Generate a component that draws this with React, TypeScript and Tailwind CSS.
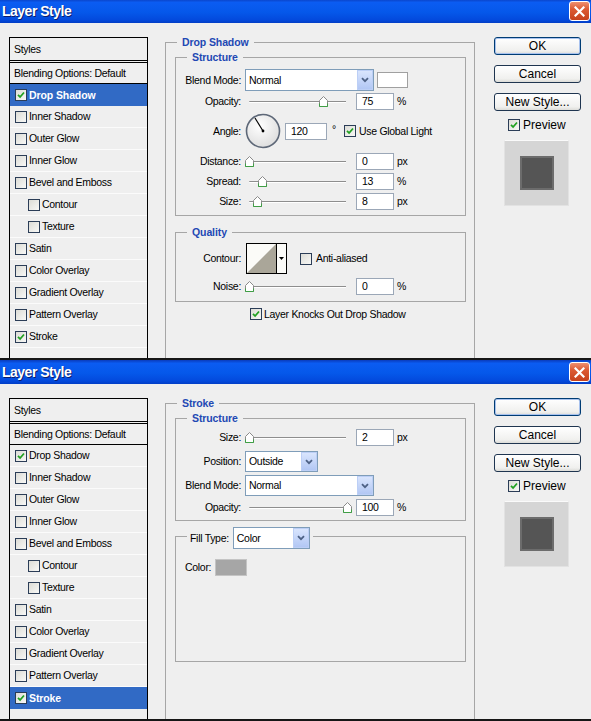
import clsx from "clsx";
import type { ReactNode } from "react";

type Effect = { name: string; indent?: boolean };

const EFFECTS: Effect[] = [
  { name: "Drop Shadow" },
  { name: "Inner Shadow" },
  { name: "Outer Glow" },
  { name: "Inner Glow" },
  { name: "Bevel and Emboss" },
  { name: "Contour", indent: true },
  { name: "Texture", indent: true },
  { name: "Satin" },
  { name: "Color Overlay" },
  { name: "Gradient Overlay" },
  { name: "Pattern Overlay" },
  { name: "Stroke" },
];

function CheckBox({ checked = false }: { checked?: boolean }) {
  return (
    <span className="flex h-[12px] w-[12px] shrink-0 items-center justify-center border border-[#2b3d57] bg-[linear-gradient(135deg,#dcdcd6,#f8f8f6)]">
      {checked && (
        <svg width="8" height="8" viewBox="0 0 8 8">
          <path d="M1 3.8 L3.1 6 L7 1.5" fill="none" stroke="#21a121" strokeWidth="1.8" />
        </svg>
      )}
    </span>
  );
}

function CloseButton() {
  return (
    <div className="flex h-[20px] w-[21px] items-center justify-center rounded-[3px] border border-white bg-[linear-gradient(to_bottom,#ee9070,#dc5a33_40%,#c6411c)]">
      <svg width="11" height="11" viewBox="0 0 11 11">
        <path d="M1.5 1.5 L9.5 9.5 M9.5 1.5 L1.5 9.5" stroke="#fff" strokeWidth="2.2" strokeLinecap="square" />
      </svg>
    </div>
  );
}

function TitleBar() {
  return (
    <div className="flex h-[24px] items-center justify-between bg-[linear-gradient(to_bottom,#0a3cbc,#0b5cf2_14%,#0558ea_55%,#0349dc_88%,#023ec6)] pl-[2px] pr-[1px]">
      <span className="text-[14px] font-bold tracking-[-0.5px] text-white [text-shadow:1px_1px_0_#0a1e6e]">
        Layer Style
      </span>
      <CloseButton />
    </div>
  );
}

function StylesList({ active, checked }: { active: string; checked: string[] }) {
  return (
    <div className="flex w-[139px] shrink-0 flex-col border-x border-black">
      <div className="flex h-[24px] items-center border-y border-black pl-[4px]">Styles</div>
      <div className="mt-[1px] flex h-[22px] items-center border-y border-black pl-[4px]">
        Blending Options: Default
      </div>
      {EFFECTS.map((fx) => (
        <div
          key={fx.name}
          className={clsx(
            "flex h-[22px] items-center gap-[2px]",
            fx.indent ? "pl-[18px]" : "pl-[5px]",
            fx.name === active
              ? "bg-[#316ac5] font-bold tracking-[-0.1px] text-white"
              : "border-b border-[#fbfbfb]"
          )}
        >
          <CheckBox checked={checked.includes(fx.name)} />
          <span>{fx.name}</span>
        </div>
      ))}
    </div>
  );
}

function Button({ children, primary = false }: { children: ReactNode; primary?: boolean }) {
  return (
    <div
      className={clsx(
        "flex h-[18px] items-center justify-center rounded-[3px] border bg-[linear-gradient(to_bottom,#ffffff,#f0f0ee_80%,#dcdcd8)] text-[12px] tracking-normal",
        primary ? "border-[#003c74] shadow-[inset_0_0_0_1px_#a8c2ee]" : "border-[#1f3550]"
      )}
    >
      {children}
    </div>
  );
}

function ActionColumn() {
  return (
    <div className="ml-[19px] flex w-[87px] shrink-0 flex-col">
      <Button primary>OK</Button>
      <div className="mt-[10px]">
        <Button>Cancel</Button>
      </div>
      <div className="mt-[10px]">
        <Button>New Style...</Button>
      </div>
      <div className="mt-[6px] flex h-[16px] items-center gap-[3px] pl-[14px] text-[12px] tracking-normal">
        <CheckBox checked />
        <span>Preview</span>
      </div>
      <div className="ml-[10px] mt-[7px] flex h-[66px] w-[65px] items-center justify-center border border-[#e2e2e2] border-t-[#fafafa] bg-[#d5d5d5]">
        <div className="h-[34px] w-[34px] border-2 border-[#6c6c6c] bg-[#555555]" />
      </div>
    </div>
  );
}

function Group({ title, className, children }: { title: ReactNode; className: string; children: ReactNode }) {
  return (
    <div className={clsx("relative border-[#a6a6a6]", className)}>
      <span className="absolute left-[11px] top-[-7px] bg-[#efefef] px-[5px] font-bold tracking-[-0.1px] text-[#2248b4]">
        {title}
      </span>
      {children}
    </div>
  );
}

function Label({ children }: { children: ReactNode }) {
  return <span className="w-[65px] shrink-0 text-right">{children}</span>;
}

function Slider({ at }: { at: number }) {
  return (
    <div className="relative ml-[4px] h-[11px] w-[106px] shrink-0">
      <div className="absolute left-[4px] top-[5px] h-[2px] w-[97px] rounded-l-full border-t border-[#8e8e8e] bg-white" />
      <svg className="absolute top-0" style={{ left: at - 4 }} width="9" height="11" viewBox="0 0 9 11">
        <path d="M0.5 4.5 L4.5 0.5 L8.5 4.5 V10.5 H0.5 Z" fill="#fff" stroke="#8a8a8a" />
        <path d="M0.5 7.5 V10.5 H8.5 V7.5" fill="none" stroke="#3f9f45" />
      </svg>
    </div>
  );
}

function NumberField({ value, className = "w-[38px]" }: { value: string; className?: string }) {
  return (
    <span className={clsx("flex h-[17px] shrink-0 items-center border border-[#9ba7b7] bg-white pl-[5px]", className)}>
      {value}
    </span>
  );
}

function Select({ value, className }: { value: string; className: string }) {
  return (
    <div className={clsx("flex shrink-0 items-stretch border border-[#7f9db9] bg-white", className)}>
      <span className="flex flex-1 items-center pl-[3px]">{value}</span>
      <span className="flex w-[16px] items-center justify-center border border-[#bccff6] bg-[linear-gradient(to_bottom,#d9e5fd,#b2c7f4)]">
        <svg width="8" height="6" viewBox="0 0 8 6">
          <path d="M1 1.2 L4 4.2 L7 1.2" fill="none" stroke="#4d6185" strokeWidth="1.8" />
        </svg>
      </span>
    </div>
  );
}

function SliderRow({ label, at, value, unit }: { label: string; at: number; value: string; unit: string }) {
  return (
    <div className="flex h-[20px] items-center">
      <Label>{label}</Label>
      <Slider at={at} />
      <span className="ml-[5px]">
        <NumberField value={value} />
      </span>
      <span className="ml-[3px]">{unit}</span>
    </div>
  );
}

function AngleDial() {
  return (
    <svg width="36" height="36" viewBox="0 0 36 36" className="ml-[4px] shrink-0">
      <defs>
        <radialGradient id="dial" cx="40%" cy="35%" r="70%">
          <stop offset="0%" stopColor="#ffffff" />
          <stop offset="100%" stopColor="#dcdcdc" />
        </radialGradient>
      </defs>
      <circle cx="18" cy="18" r="16.5" fill="url(#dial)" stroke="#5e6878" strokeWidth="1.6" />
      <path d="M18 18 L10 5" stroke="#000" strokeWidth="1.2" />
      <circle cx="18" cy="18" r="1.4" fill="#000" />
    </svg>
  );
}

function ContourPicker() {
  return (
    <svg width="41" height="31" viewBox="0 0 41 31" className="ml-[5px] shrink-0">
      <rect x="0.5" y="0.5" width="40" height="30" fill="#fbfbf8" stroke="#000" />
      <path d="M1 30 L30 1 L30 30 Z" fill="#aaa699" />
      <path d="M30.5 0 V31" stroke="#000" />
      <path d="M33 14 H38 L35.5 17 Z" fill="#000" />
    </svg>
  );
}

function DropShadowPanel() {
  return (
    <Group title="Drop Shadow" className="mt-[5px] w-[310px] shrink-0 border-x border-t pt-[14px]">
      <Group title="Structure" className="ml-[9px] h-[159px] w-[291px] border pt-[11px]">
        <div className="flex h-[22px] items-center">
          <Label>Blend Mode:</Label>
          <Select value="Normal" className="ml-[4px] h-[22px] w-[129px]" />
          <span className="ml-[3px] h-[16px] w-[31px] border border-[#a0a0a0] bg-white" />
        </div>
        <SliderRow label="Opacity:" at={78} value="75" unit="%" />
        <div className="flex h-[40px] items-center">
          <Label>Angle:</Label>
          <AngleDial />
          <span className="ml-[4px]">
            <NumberField value="120" className="w-[42px]" />
          </span>
          <span className="ml-[5px] w-[12px] self-start pt-[12px]">°</span>
          <CheckBox checked />
          <span className="ml-[3px]">Use Global Light</span>
        </div>
        <SliderRow label="Distance:" at={4} value="0" unit="px" />
        <SliderRow label="Spread:" at={17} value="13" unit="%" />
        <SliderRow label="Size:" at={12} value="8" unit="px" />
      </Group>
      <Group title="Quality" className="ml-[9px] mt-[16px] h-[70px] w-[291px] border pt-[10px]">
        <div className="flex h-[31px] items-center">
          <Label>Contour:</Label>
          <ContourPicker />
          <span className="ml-[13px]">
            <CheckBox />
          </span>
          <span className="ml-[4px]">Anti-aliased</span>
        </div>
        <div className="mt-[2px]">
          <SliderRow label="Noise:" at={4} value="0" unit="%" />
        </div>
      </Group>
      <div className="mt-[4px] flex h-[16px] items-center gap-[2px] pl-[84px]">
        <CheckBox checked />
        <span>Layer Knocks Out Drop Shadow</span>
      </div>
    </Group>
  );
}

function StrokePanel() {
  return (
    <Group title="Stroke" className="mt-[5px] w-[310px] shrink-0 border-x border-t pt-[14px]">
      <Group title="Structure" className="ml-[9px] h-[103px] w-[291px] border pt-[8px]">
        <SliderRow label="Size:" at={4} value="2" unit="px" />
        <div className="mt-[4px] flex h-[21px] items-center">
          <Label>Position:</Label>
          <Select value="Outside" className="ml-[4px] h-[21px] w-[73px]" />
        </div>
        <div className="mt-[3px] flex h-[21px] items-center">
          <Label>Blend Mode:</Label>
          <Select value="Normal" className="ml-[4px] h-[21px] w-[129px]" />
        </div>
        <div className="mt-[1px]">
          <SliderRow label="Opacity:" at={102} value="100" unit="%" />
        </div>
      </Group>
      <div className="relative ml-[9px] mt-[15px] h-[126px] w-[291px] border border-[#a6a6a6] pl-[9px] pt-[22px]">
        <div className="absolute left-[11px] top-[-10px] flex items-center bg-[#efefef] px-[3px]">
          <span>Fill Type:</span>
          <Select value="Color" className="ml-[4px] h-[22px] w-[77px]" />
        </div>
        <div className="flex h-[16px] items-center">
          <span>Color:</span>
          <span className="ml-[4px] h-[17px] w-[32px] border border-[#c4c4c4] bg-[#a6a6a6]" />
        </div>
      </div>
    </Group>
  );
}

function LayerStyleDialog({
  active,
  checked,
  className,
  children,
}: {
  active: string;
  checked: string[];
  className?: string;
  children: ReactNode;
}) {
  return (
    <div className={className}>
      <TitleBar />
      <div className="flex h-[337px] border-b-2 border-[#161616] pl-[9px] pt-[14px]">
        <StylesList active={active} checked={checked} />
        <div className="ml-[17px] flex">{children}</div>
        <ActionColumn />
      </div>
    </div>
  );
}

export default function App() {
  return (
    <div className="h-[721px] w-[591px] overflow-hidden bg-[#efefef] font-['Liberation_Sans',Arial,sans-serif] text-[10.5px] leading-[13px] tracking-[-0.3px] text-black">
      <LayerStyleDialog active="Drop Shadow" checked={["Drop Shadow", "Stroke"]} className="-mt-[1px]">
        <DropShadowPanel />
      </LayerStyleDialog>
      <LayerStyleDialog active="Stroke" checked={["Drop Shadow", "Stroke"]}>
        <StrokePanel />
      </LayerStyleDialog>
    </div>
  );
}
